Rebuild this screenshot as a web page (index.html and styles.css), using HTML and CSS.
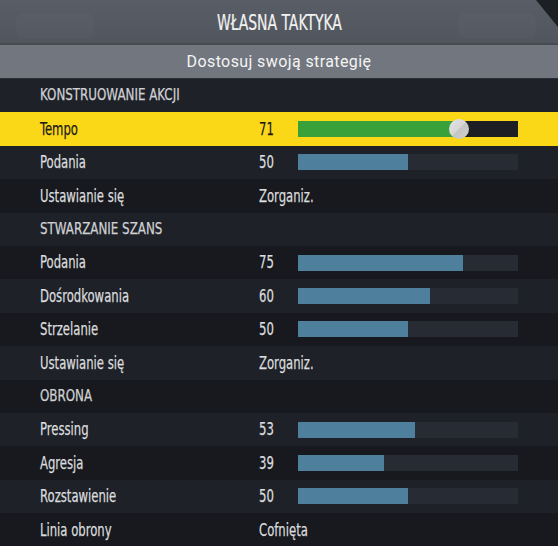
FILE: index.html
```html
<!DOCTYPE html>
<html lang="pl">
<head>
<meta charset="utf-8">
<title>Własna taktyka</title>
<link rel="stylesheet" href="styles.css">
</head>
<body>
<div class="screen">
  <header class="titlebar">
    <span class="ghost ghost-left"></span>
    <span class="ghost ghost-right"></span>
    <span class="corner"></span>
    <h1 class="title">WŁASNA TAKTYKA</h1>
  </header>
  <div class="subtitle">Dostosuj swoją strategię</div>
  <div class="list">
    <div class="row light section"><span class="label">KONSTRUOWANIE AKCJI</span></div>
    <div class="row selected">
      <span class="label">Tempo</span><span class="value">71</span>
      <span class="track"><span class="fill" style="width:71%"></span><span class="knob"></span></span>
    </div>
    <div class="row light">
      <span class="label">Podania</span><span class="value">50</span>
      <span class="track"><span class="fill" style="width:50%"></span></span>
    </div>
    <div class="row dark">
      <span class="label">Ustawianie się</span><span class="value">Zorganiz.</span>
    </div>
    <div class="row light section"><span class="label">STWARZANIE SZANS</span></div>
    <div class="row dark">
      <span class="label">Podania</span><span class="value">75</span>
      <span class="track"><span class="fill" style="width:75%"></span></span>
    </div>
    <div class="row light">
      <span class="label">Dośrodkowania</span><span class="value">60</span>
      <span class="track"><span class="fill" style="width:60%"></span></span>
    </div>
    <div class="row dark">
      <span class="label">Strzelanie</span><span class="value">50</span>
      <span class="track"><span class="fill" style="width:50%"></span></span>
    </div>
    <div class="row light">
      <span class="label">Ustawianie się</span><span class="value">Zorganiz.</span>
    </div>
    <div class="row dark section"><span class="label">OBRONA</span></div>
    <div class="row light">
      <span class="label">Pressing</span><span class="value">53</span>
      <span class="track"><span class="fill" style="width:53%"></span></span>
    </div>
    <div class="row dark">
      <span class="label">Agresja</span><span class="value">39</span>
      <span class="track"><span class="fill" style="width:39%"></span></span>
    </div>
    <div class="row light">
      <span class="label">Rozstawienie</span><span class="value">50</span>
      <span class="track"><span class="fill" style="width:50%"></span></span>
    </div>
    <div class="row dark">
      <span class="label">Linia obrony</span><span class="value">Cofnięta</span>
    </div>
  </div>
</div>
</body>
</html>
```

FILE: styles.css
```css
html, body {
  margin: 0;
  padding: 0;
  background: #16191e;
}
.screen {
  width: 558px;
  height: 546px;
  overflow: hidden;
  display: flex;
  flex-direction: column;
  font-family: "DejaVu Sans Condensed", "Liberation Sans Narrow", "Liberation Sans", sans-serif;
}
.titlebar {
  position: relative;
  height: 45px;
  flex: none;
  box-sizing: border-box;
  background: linear-gradient(#595d65, #51555d);
  border-bottom: 2px solid #474b52;
  display: flex;
  align-items: center;
  justify-content: center;
  overflow: hidden;
}
.ghost {
  position: absolute;
  top: 13px;
  width: 78px;
  height: 26px;
  border-radius: 8px;
  background: rgba(255,255,255,0.018);
}
.ghost-left { left: 16px; }
.ghost-right { left: 458px; }
.corner {
  position: absolute;
  top: 0;
  right: 0;
  width: 22px;
  height: 27px;
  background: #1c1f23;
  clip-path: polygon(0 0, 100% 0, 100% 100%);
}
.title {
  margin: 0;
  font-size: 21px;
  font-weight: normal;
  color: #f2f2f2;
  position: relative;
  top: 1px;
  transform: scaleX(0.74);
  white-space: nowrap;
  -webkit-text-stroke: 0.2px currentColor;
}
.subtitle {
  height: 33px;
  flex: none;
  background: #72767e;
  color: #f4f4f4;
  font-family: "Roboto", "Liberation Sans", sans-serif;
  font-size: 16px;
  letter-spacing: 0.4px;
  display: flex;
  align-items: center;
  justify-content: center;
  border-bottom: 1px solid #2a2d33;
}
.list {
  display: flex;
  flex-direction: column;
}
.row {
  height: 33.4px;
  flex: none;
  box-sizing: border-box;
  padding-left: 40px;
  display: grid;
  grid-template-columns: 219px 39px 220px;
  align-items: center;
  color: #dcdddf;
  font-size: 18.5px;
}
.row.light { background: #1e2128; }
.row.dark { background: #17191e; }
.row.section {
  display: flex;
  color: #d0d1d4;
  font-size: 16.5px;
}
.row.selected {
  background: #fad817;
  color: #1a1a1a;
}
.label, .value {
  display: inline-block;
  white-space: nowrap;
  line-height: 1;
  transform: scaleX(0.7);
  transform-origin: left center;
  -webkit-text-stroke: 0.25px currentColor;
}
.section .label {
  transform: scaleX(0.8);
}
.track {
  position: relative;
  height: 16px;
  background: #272b33;
}
.fill {
  display: block;
  height: 100%;
  background: #4e7f9c;
}
.selected .track {
  background: #1d1e23;
}
.selected .fill {
  background: #39a13a;
}
.knob {
  position: absolute;
  left: 151px;
  top: -2px;
  width: 20px;
  height: 20px;
  border-radius: 50%;
  background: linear-gradient(135deg, #e4e4e4 0%, #d6d6d6 48%, #c4c4c4 52%, #d0d0d0 100%);
}
```
